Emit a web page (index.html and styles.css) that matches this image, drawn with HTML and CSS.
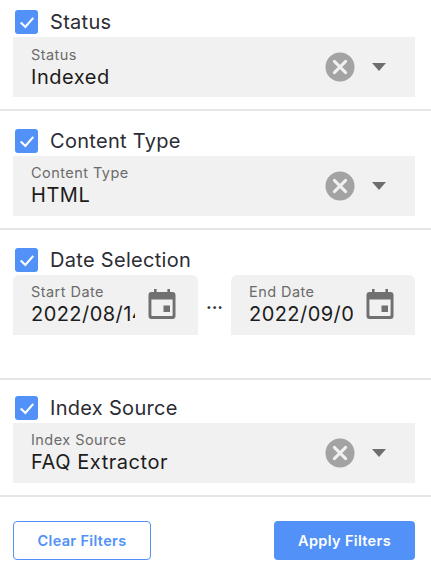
FILE: index.html
```html
<!DOCTYPE html>
<html lang="en">
<head>
<meta charset="utf-8">
<title>Filters</title>
<link rel="stylesheet" href="styles.css">
</head>
<body>
<svg class="defs" width="0" height="0" aria-hidden="true">
  <symbol id="clear" viewBox="0 0 32 32">
    <circle cx="16" cy="16" r="15.5" fill="#a3a3a3"/>
    <path d="M10 10 22 22M22 10 10 22" stroke="#f1f1f1" stroke-width="3.2" stroke-linecap="round" fill="none"/>
  </symbol>
  <symbol id="calendar" viewBox="0 0 28 32">
    <path fill-rule="evenodd" fill="#707070" d="M6 1h2.6v3h10.8V1H22v3h2.5A3 3 0 0 1 27.5 7v21a3 3 0 0 1-3 3h-21a3 3 0 0 1-3-3V7a3 3 0 0 1 3-3H6zM3.4 11.5V27a1 1 0 0 0 1 1h19.2a1 1 0 0 0 1-1V11.5zM15.5 17.5h6.5V24h-6.5z"/>
  </symbol>
</svg>

<section class="group group-status">
  <label class="head">
    <span class="check"><svg viewBox="0 0 24 24"><path d="M4.5 12.6 10 18 19.5 7" fill="none" stroke="#fff" stroke-width="2.6"/></svg></span>
    <span class="title">Status</span>
  </label>
  <div class="field select">
    <div class="value-wrap"><span class="label">Status</span><span class="value">Indexed</span></div>
    <svg class="clear"><use href="#clear"/></svg>
    <span class="arrow"></span>
  </div>
</section>

<section class="group group-type">
  <label class="head">
    <span class="check"><svg viewBox="0 0 24 24"><path d="M4.5 12.6 10 18 19.5 7" fill="none" stroke="#fff" stroke-width="2.6"/></svg></span>
    <span class="title">Content Type</span>
  </label>
  <div class="field select">
    <div class="value-wrap"><span class="label">Content Type</span><span class="value">HTML</span></div>
    <svg class="clear"><use href="#clear"/></svg>
    <span class="arrow"></span>
  </div>
</section>

<section class="group group-date">
  <label class="head">
    <span class="check"><svg viewBox="0 0 24 24"><path d="M4.5 12.6 10 18 19.5 7" fill="none" stroke="#fff" stroke-width="2.6"/></svg></span>
    <span class="title">Date Selection</span>
  </label>
  <div class="dates">
    <div class="field date start">
      <div class="value-wrap"><span class="label">Start Date</span><span class="value">2022/08/14</span></div>
      <svg class="cal"><use href="#calendar"/></svg>
    </div>
    <span class="dots">...</span>
    <div class="field date end">
      <div class="value-wrap"><span class="label">End Date</span><span class="value">2022/09/07</span></div>
      <svg class="cal"><use href="#calendar"/></svg>
    </div>
  </div>
</section>

<section class="group group-source">
  <label class="head">
    <span class="check"><svg viewBox="0 0 24 24"><path d="M4.5 12.6 10 18 19.5 7" fill="none" stroke="#fff" stroke-width="2.6"/></svg></span>
    <span class="title">Index Source</span>
  </label>
  <div class="field select">
    <div class="value-wrap"><span class="label">Index Source</span><span class="value">FAQ Extractor</span></div>
    <svg class="clear"><use href="#clear"/></svg>
    <span class="arrow"></span>
  </div>
</section>

<footer class="actions">
  <button class="btn btn-clear" type="button">Clear Filters</button>
  <button class="btn btn-apply" type="button">Apply Filters</button>
</footer>
</body>
</html>
```

FILE: styles.css
```css
* { box-sizing: border-box; }
html, body { margin: 0; padding: 0; }
body {
  width: 431px;
  height: 573px;
  overflow: hidden;
  background: #fff;
  font-family: Inter, "Liberation Sans", sans-serif;
  color: #1f1f1f;
}
.defs { position: absolute; }
.group {
  padding: 18px 16px 0 13px;
  border-bottom: 2px solid #e6e6e6;
}
.group-status { height: 111px; padding-top: 10px; }
.group-type { height: 119px; }
.group-date { height: 150px; }
.group-source { height: 117px; padding-top: 16px; }
.group-status .value-wrap { padding-top: 1px; }
.head {
  display: flex;
  align-items: center;
  height: 24px;
  margin-bottom: 3px;
  padding-left: 2px;
}
.check {
  width: 23px;
  height: 24px;
  border-radius: 3px;
  background: #5191f8;
  display: flex;
  align-items: center;
  justify-content: center;
}
.check svg { width: 20px; height: 20px; }
.title {
  margin-left: 12px;
  font-size: 20px;
  line-height: 24px;
  letter-spacing: 0.3px;
  color: #2c2c34;
}
.field {
  height: 60px;
  background: #f1f1f1;
  display: flex;
  align-items: center;
}
.select { padding: 0 29px 0 18px; }
.value-wrap {
  flex: 1;
  min-width: 0;
  overflow: hidden;
  display: flex;
  flex-direction: column;
}
.label {
  font-size: 14.5px;
  line-height: 18px;
  letter-spacing: 0.45px;
  color: #6b6b6b;
}
.value {
  font-size: 20px;
  line-height: 26px;
  letter-spacing: 0.55px;
  color: #1c1c1c;
  white-space: nowrap;
}
.clear { width: 30px; height: 30px; flex: none; margin-right: 17px; }
.arrow {
  flex: none;
  width: 0;
  height: 0;
  border-left: 7.5px solid transparent;
  border-right: 7.5px solid transparent;
  border-top: 8px solid #6e6e6e;
}
.dates { display: flex; align-items: stretch; }
.date { padding: 0 22px 0 18px; border-radius: 6px 6px 0 0; }
.start { width: 185px; }
.end { width: 184px; }
.date .value-wrap { flex: none; width: 104px; margin-right: 13px; }
.date .value { letter-spacing: 0.45px; }
.cal { width: 28px; height: 32px; flex: none; margin-top: -3px; }
.dots {
  width: 33px;
  text-align: center;
  font-size: 18px;
  line-height: 18px;
  font-weight: 600;
  color: #333;
  align-self: center;
  margin-top: -4px;
}
.actions {
  display: flex;
  justify-content: space-between;
  padding: 24px 16px 0 13px;
}
.btn {
  height: 39px;
  border-radius: 4px;
  font-family: inherit;
  font-size: 14.5px;
  font-weight: 600;
  letter-spacing: 0.35px;
  padding: 0;
}
.btn-clear {
  width: 138px;
  background: #fff;
  color: #5191f8;
  border: 1px solid #5191f8;
}
.btn-apply {
  width: 141px;
  background: #5191f8;
  color: #fff;
  border: 0;
}
```
